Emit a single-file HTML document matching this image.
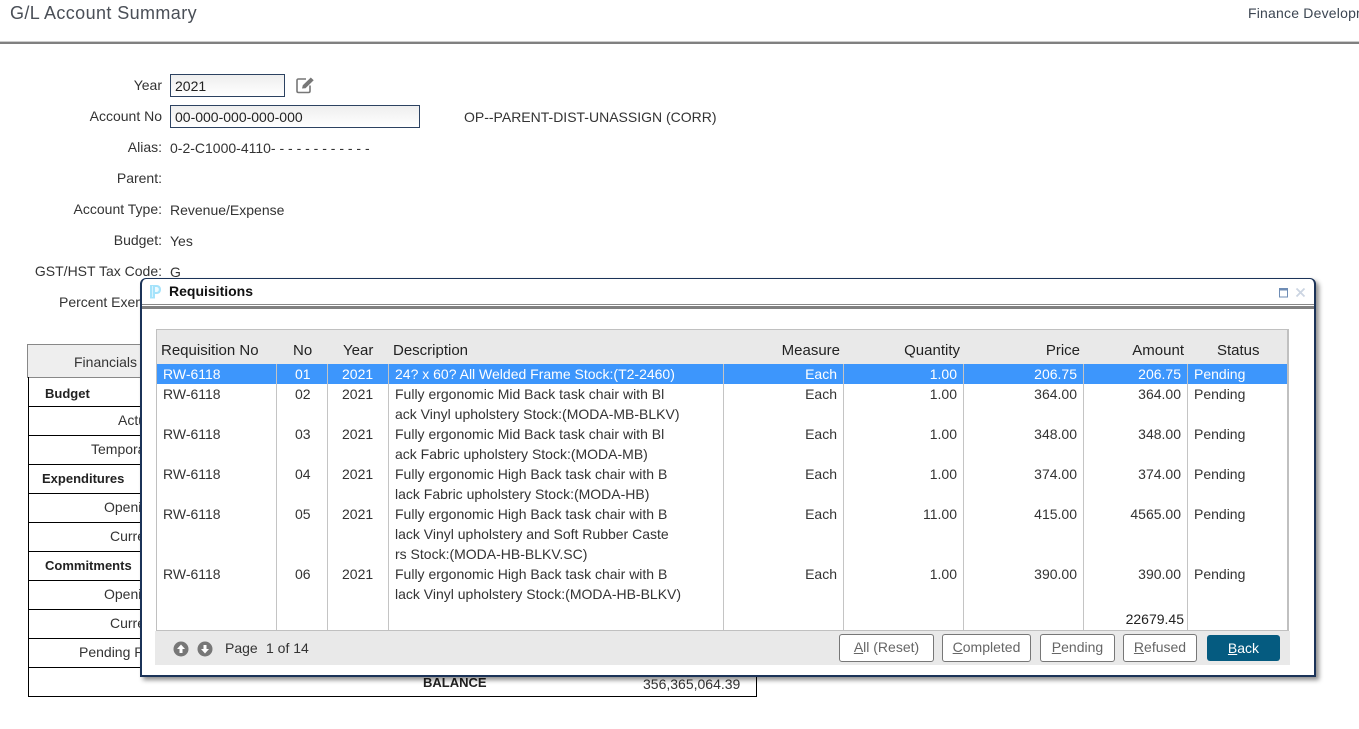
<!DOCTYPE html>
<html><head><meta charset="utf-8"><title>G/L Account Summary</title>
<style>
html,body{margin:0;padding:0;background:#fff}
#p{position:relative;width:1359px;height:729px;overflow:hidden;background:#fff;font-family:"Liberation Sans",Arial,sans-serif;font-size:14px;color:#333}
.t{position:absolute;white-space:nowrap;line-height:20px}
.r{text-align:right}
.b{font-weight:bold;color:#222}
.l{position:absolute;background:#000}
.v{position:absolute;width:1px;background:#c4c4c4;top:364px;height:266px}
.h{color:#222;font-size:15px}
.w{color:#fff}
.btn{position:absolute;top:634px;height:26px;border:1px solid #777;border-radius:3px;background:#fff;color:#666;text-align:center;line-height:24px;font-size:14px;box-sizing:content-box}
.btn u{text-decoration:underline}
</style></head><body><div id="p">

<div class="t" style="left:10px;top:3px;font-size:18px;color:#4a4f57;letter-spacing:.4px">G/L Account Summary</div>
<div class="t" style="left:1248px;top:3px;font-size:14px;color:#3c4652;letter-spacing:.2px">Finance Development</div>
<div style="position:absolute;left:0;top:41px;width:1359px;height:3px;background:linear-gradient(#ccc 0,#ccc 33%,#808080 33%)"></div>

<div class="t r" style="right:1197px;top:75px">Year</div>
<div style="position:absolute;left:170px;top:74px;width:113px;height:21px;border:1px solid #2c4261;background:linear-gradient(#eee,#fff)"></div>
<div class="t" style="left:175px;top:76px;color:#222">2021</div>
<svg style="position:absolute;left:295px;top:76px" width="20" height="18" viewBox="0 0 20 18"><path d="M11 3H3.500C2.600 3 2 3.600 2 4.500V15C2 15.900 2.600 16.500 3.500 16.500H13.500C14.400 16.500 15 15.900 15 15V9.500" fill="none" stroke="#777" stroke-width="1.600"/><path d="M7 12.500L7.800 9.300L15.800 1.500L18.700 4.200L10.500 12.200Z" fill="#777"/></svg>

<div class="t r" style="right:1197px;top:106px">Account No</div>
<div style="position:absolute;left:170px;top:105px;width:248px;height:21px;border:1px solid #2c4261;background:linear-gradient(#eee,#fff)"></div>
<div class="t" style="left:175px;top:107px;color:#222">00-000-000-000-000</div>
<div class="t" style="left:464px;top:107px">OP--PARENT-DIST-UNASSIGN (CORR)</div>

<div class="t r" style="right:1197px;top:137px">Alias:</div>
<div class="t" style="left:170px;top:138px">0-2-C1000-4110- - - - - - - - - - - - </div>
<div class="t r" style="right:1197px;top:168px">Parent:</div>
<div class="t r" style="right:1197px;top:199px">Account Type:</div>
<div class="t" style="left:170px;top:200px">Revenue/Expense</div>
<div class="t r" style="right:1197px;top:230px">Budget:</div>
<div class="t" style="left:170px;top:231px">Yes</div>
<div class="t r" style="right:1197px;top:261px">GST/HST Tax Code:</div>
<div class="t" style="left:170px;top:262px">G</div>
<div class="t" style="left:59px;top:292px">Percent Exempt:</div>

<div style="position:absolute;left:27px;top:344px;width:200px;height:32px;background:#eee;border:1px solid #888"></div>
<div class="t" style="left:74px;top:352px">Financials</div>
<div class="l" style="left:28px;top:377px;width:1px;height:320px"></div>
<div class="l" style="left:756px;top:660px;width:1px;height:37px"></div>
<div class="l" style="left:28px;top:406px;width:200px;height:1px"></div>
<div class="l" style="left:28px;top:435px;width:200px;height:1px"></div>
<div class="l" style="left:28px;top:464px;width:200px;height:1px"></div>
<div class="l" style="left:28px;top:493px;width:200px;height:1px"></div>
<div class="l" style="left:28px;top:522px;width:200px;height:1px"></div>
<div class="l" style="left:28px;top:551px;width:200px;height:1px"></div>
<div class="l" style="left:28px;top:580px;width:200px;height:1px"></div>
<div class="l" style="left:28px;top:609px;width:200px;height:1px"></div>
<div class="l" style="left:28px;top:638px;width:200px;height:1px"></div>
<div class="l" style="left:28px;top:667px;width:200px;height:1px"></div>
<div class="l" style="left:28px;top:696px;width:729px;height:1px"></div>
<div class="t b" style="left:45px;top:384px;font-size:13px">Budget</div>
<div class="t" style="left:118px;top:410px">Actual</div>
<div class="t" style="left:91px;top:439px">Temporary</div>
<div class="t b" style="left:42px;top:469px;font-size:13px">Expenditures</div>
<div class="t" style="left:104px;top:497px">Opening</div>
<div class="t" style="left:110px;top:526px">Current</div>
<div class="t b" style="left:45px;top:556px;font-size:13px">Commitments</div>
<div class="t" style="left:104px;top:584px">Opening</div>
<div class="t" style="left:110px;top:613px">Current</div>
<div class="t" style="left:79px;top:642px">Pending Req</div>
<div class="t b" style="left:423px;top:673px;font-size:13px">BALANCE</div>
<div class="t" style="left:643px;top:674px">356,365,064.39</div>

<!-- modal -->
<div style="position:absolute;left:140px;top:278px;width:1172px;height:396px;border:2px solid #1b3358;border-top-width:1px;border-radius:6px 6px 0 0;background:#fff;box-shadow:3px 3px 5px rgba(0,0,0,.45)"></div>
<svg style="position:absolute;left:149px;top:284px" width="13" height="15" viewBox="0 0 13 15"><path d="M1 1H7.500C10.500 1 12 3 12 5.500C12 8 10.500 10 7.500 10H6V14.500H1Z" fill="#a5e3fb"/><path d="M3 2V13H4V2Z" fill="#d8f3fe"/><path d="M6 3H7.500C9 3 9.800 4.200 9.800 5.500C9.800 6.800 9 8 7.500 8H6Z" fill="#eefaff"/></svg>
<div class="t" style="left:169px;top:281px;font-weight:bold;font-size:14px;color:#111">Requisitions</div>
<svg style="position:absolute;left:1279px;top:288px" width="32" height="10" viewBox="0 0 32 10"><rect x=".5" y=".5" width="8" height="8.500" fill="none" stroke="#6f8db5"/><rect x="0" y="0" width="9" height="2.500" fill="#6f8db5"/><path d="M17.500 .5L25.500 8.500M25.500 .5L17.500 8.500" stroke="#ccd5e2" stroke-width="1.800"/></svg>
<div style="position:absolute;left:142px;top:304px;width:1172px;height:1px;background:#888"></div>
<div style="position:absolute;left:142px;top:306px;width:1172px;height:3px;background:#808080"></div>

<!-- table -->
<div style="position:absolute;left:156px;top:329px;width:1130px;height:300px;border:1px solid #c0c0c0;border-right-width:2px;background:#fff"></div>
<div style="position:absolute;left:157px;top:330px;width:1130px;height:34px;background:#e9e9e9"></div>
<div style="position:absolute;left:157px;top:364px;width:1130px;height:20px;background:#3d96fc"></div>
<div class="v" style="left:276px"></div>
<div class="v" style="left:327px"></div>
<div class="v" style="left:388px"></div>
<div class="v" style="left:723px"></div>
<div class="v" style="left:843px"></div>
<div class="v" style="left:963px"></div>
<div class="v" style="left:1083px"></div>
<div class="v" style="left:1187px"></div>

<div class="t h" style="left:161px;top:341px">Requisition No</div>
<div class="t h" style="left:293px;top:341px">No</div>
<div class="t h" style="left:343px;top:341px">Year</div>
<div class="t h" style="left:393px;top:341px">Description</div>
<div class="t h r" style="right:519px;top:341px">Measure</div>
<div class="t h r" style="right:399px;top:341px">Quantity</div>
<div class="t h r" style="right:279px;top:341px">Price</div>
<div class="t h r" style="right:175px;top:341px">Amount</div>
<div class="t h" style="left:1217px;top:341px">Status</div>

<div class="t w" style="left:163px;top:364px">RW-6118</div>
<div class="t w" style="left:295px;top:364px">01</div>
<div class="t w" style="left:342px;top:364px">2021</div>
<div class="t w" style="left:395px;top:364px">24? x 60? All Welded Frame Stock:(T2-2460)</div>
<div class="t w r" style="right:522px;top:364px">Each</div>
<div class="t w r" style="right:402px;top:364px">1.00</div>
<div class="t w r" style="right:282px;top:364px">206.75</div>
<div class="t w r" style="right:178px;top:364px">206.75</div>
<div class="t w" style="left:1194px;top:364px">Pending</div>

<div class="t" style="left:163px;top:384px">RW-6118</div>
<div class="t" style="left:295px;top:384px">02</div>
<div class="t" style="left:342px;top:384px">2021</div>
<div class="t" style="left:395px;top:384px">Fully ergonomic Mid Back task chair with Bl<br>ack Vinyl upholstery Stock:(MODA-MB-BLKV)</div>
<div class="t r" style="right:522px;top:384px">Each</div>
<div class="t r" style="right:402px;top:384px">1.00</div>
<div class="t r" style="right:282px;top:384px">364.00</div>
<div class="t r" style="right:178px;top:384px">364.00</div>
<div class="t" style="left:1194px;top:384px">Pending</div>

<div class="t" style="left:163px;top:424px">RW-6118</div>
<div class="t" style="left:295px;top:424px">03</div>
<div class="t" style="left:342px;top:424px">2021</div>
<div class="t" style="left:395px;top:424px">Fully ergonomic Mid Back task chair with Bl<br>ack Fabric upholstery Stock:(MODA-MB)</div>
<div class="t r" style="right:522px;top:424px">Each</div>
<div class="t r" style="right:402px;top:424px">1.00</div>
<div class="t r" style="right:282px;top:424px">348.00</div>
<div class="t r" style="right:178px;top:424px">348.00</div>
<div class="t" style="left:1194px;top:424px">Pending</div>

<div class="t" style="left:163px;top:464px">RW-6118</div>
<div class="t" style="left:295px;top:464px">04</div>
<div class="t" style="left:342px;top:464px">2021</div>
<div class="t" style="left:395px;top:464px">Fully ergonomic High Back task chair with B<br>lack Fabric upholstery Stock:(MODA-HB)</div>
<div class="t r" style="right:522px;top:464px">Each</div>
<div class="t r" style="right:402px;top:464px">1.00</div>
<div class="t r" style="right:282px;top:464px">374.00</div>
<div class="t r" style="right:178px;top:464px">374.00</div>
<div class="t" style="left:1194px;top:464px">Pending</div>

<div class="t" style="left:163px;top:504px">RW-6118</div>
<div class="t" style="left:295px;top:504px">05</div>
<div class="t" style="left:342px;top:504px">2021</div>
<div class="t" style="left:395px;top:504px">Fully ergonomic High Back task chair with B<br>lack Vinyl upholstery and Soft Rubber Caste<br>rs Stock:(MODA-HB-BLKV.SC)</div>
<div class="t r" style="right:522px;top:504px">Each</div>
<div class="t r" style="right:402px;top:504px">11.00</div>
<div class="t r" style="right:282px;top:504px">415.00</div>
<div class="t r" style="right:178px;top:504px">4565.00</div>
<div class="t" style="left:1194px;top:504px">Pending</div>

<div class="t" style="left:163px;top:564px">RW-6118</div>
<div class="t" style="left:295px;top:564px">06</div>
<div class="t" style="left:342px;top:564px">2021</div>
<div class="t" style="left:395px;top:564px">Fully ergonomic High Back task chair with B<br>lack Vinyl upholstery Stock:(MODA-HB-BLKV)</div>
<div class="t r" style="right:522px;top:564px">Each</div>
<div class="t r" style="right:402px;top:564px">1.00</div>
<div class="t r" style="right:282px;top:564px">390.00</div>
<div class="t r" style="right:178px;top:564px">390.00</div>
<div class="t" style="left:1194px;top:564px">Pending</div>

<div class="t r" style="right:175px;top:609px;color:#222">22679.45</div>

<!-- footer -->
<div style="position:absolute;left:155px;top:631px;width:1135px;height:34px;background:#e9e9e9"></div>
<svg style="position:absolute;left:173px;top:641px" width="16" height="16" viewBox="0 0 16 16"><circle cx="8" cy="8" r="7.500" fill="#777"/><path d="M8 3.500L12 8H9.500V12H6.500V8H4Z" fill="#fff"/></svg>
<svg style="position:absolute;left:197px;top:641px" width="16" height="16" viewBox="0 0 16 16"><circle cx="8" cy="8" r="7.500" fill="#777"/><path d="M8 12.500L12 8H9.500V4H6.500V8H4Z" fill="#fff"/></svg>
<div class="t" style="left:225px;top:638px">Page</div>
<div class="t" style="left:266px;top:638px">1 of 14</div>

<div class="btn" style="left:839px;width:93px"><u>A</u>ll (Reset)</div>
<div class="btn" style="left:942px;width:87px"><u>C</u>ompleted</div>
<div class="btn" style="left:1040px;width:73px"><u>P</u>ending</div>
<div class="btn" style="left:1123px;width:72px"><u>R</u>efused</div>
<div class="btn" style="left:1207px;top:635px;width:73px;height:26px;border:0;background:#055b80;color:#fff;line-height:26px"><u>B</u>ack</div>

</div></body></html>
